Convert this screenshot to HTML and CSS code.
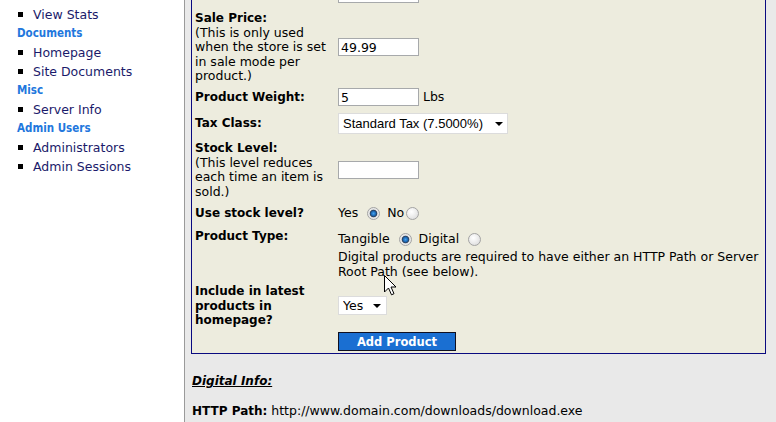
FILE: index.html
```html
<!DOCTYPE html>
<html>
<head>
<meta charset="utf-8">
<title>Add Product</title>
<link rel="stylesheet" href="styles.css">
</head>
<body>
<div class="page">
  <aside class="sidebar">
    <ul class="nav">
      <li class="item"><a href="#">View Stats</a></li>
      <li class="head">Documents</li>
      <li class="item"><a href="#">Homepage</a></li>
      <li class="item"><a href="#">Site Documents</a></li>
      <li class="head">Misc</li>
      <li class="item"><a href="#">Server Info</a></li>
      <li class="head">Admin Users</li>
      <li class="item"><a href="#">Administrators</a></li>
      <li class="item"><a href="#">Admin Sessions</a></li>
    </ul>
  </aside>
  <main class="main">
    <form class="formbox">
      <div class="row row-a">
        <div class="lbl"></div>
        <div class="fld"><input class="txt" type="text" value="59.99"></div>
      </div>
      <div class="row row-b">
        <div class="lbl"><b>Sale Price:</b><br>(This is only used when the store is set in sale mode per product.)</div>
        <div class="fld"><input class="txt" type="text" value="49.99"></div>
      </div>
      <div class="row row-c">
        <div class="lbl"><b>Product Weight:</b></div>
        <div class="fld"><input class="txt" type="text" value="5"> Lbs</div>
      </div>
      <div class="row row-d">
        <div class="lbl"><b>Tax Class:</b></div>
        <div class="fld"><span class="sel sel-tax"><select><option>Standard Tax (7.5000%)</option></select></span></div>
      </div>
      <div class="row row-e">
        <div class="lbl"><b>Stock Level:</b><br>(This level reduces each time an item is sold.)</div>
        <div class="fld"><input class="txt" type="text" value=""></div>
      </div>
      <div class="row row-f">
        <div class="lbl"><b>Use stock level?</b></div>
        <div class="fld">Yes <input class="radio" type="radio" name="stock" checked> No<input class="radio tight" type="radio" name="stock"></div>
      </div>
      <div class="row row-g">
        <div class="lbl"><b>Product Type:</b></div>
        <div class="fld">
          <div class="radios">Tangible <input class="radio" type="radio" name="ptype" checked> Digital <input class="radio" type="radio" name="ptype"></div>
          <div class="note">Digital products are required to have either an HTTP Path or Server Root Path (see below).</div>
        </div>
      </div>
      <div class="row row-h">
        <div class="lbl"><b>Include in latest products in homepage?</b></div>
        <div class="fld"><span class="sel sel-yes"><select><option>Yes</option></select></span></div>
      </div>
      <div class="row row-i">
        <div class="lbl"></div>
        <div class="fld"><button type="button" class="btn">Add Product</button></div>
      </div>
    </form>
    <h3 class="sub">Digital Info:</h3>
    <p class="path"><b>HTTP Path:</b> http://www.domain.com/downloads/download.exe</p>
  </main>
</div>
<svg class="cursor" width="13" height="21" viewBox="0 0 13 21"><path d="M0.5 0.5 L0.5 17 L4.5 13 L7.5 19.8 L10 18.7 L7 12 L12 12 Z" fill="#fff" stroke="#000" stroke-width="1" stroke-linejoin="miter"/></svg>
</body>
</html>
```
FILE: styles.css
```css
html, body {
  margin: 0;
  padding: 0;
}
body {
  font-family: "DejaVu Sans", Verdana, sans-serif;
  font-size: 12.5px;
  line-height: 14.5px;
  color: #000;
  background: #e9e9e9;
  height: 422px;
  overflow: hidden;
  position: relative;
}
.page {
  display: flex;
  height: 422px;
}
.sidebar {
  width: 184px;
  flex: none;
  background: #fff;
  border-right: 1px solid #9a9a9a;
}
.nav {
  list-style: none;
  margin: 0;
  padding: 5px 0 0 0;
}
.nav li {
  line-height: 19px;
  height: 19px;
}
.nav .head {
  padding-left: 17px;
  color: #2277dd;
  font-family: "DejaVu Sans Condensed", "DejaVu Sans", sans-serif;
  font-stretch: condensed;
  font-weight: bold;
  font-size: 11.5px;
}
.nav .item {
  padding-left: 33px;
  position: relative;
}
.nav .item::before {
  content: "";
  position: absolute;
  left: 18px;
  top: 7px;
  width: 5px;
  height: 5px;
  background: #000;
}
.nav .item a {
  color: #1a1a6a;
  text-decoration: none;
}
.main {
  flex: 1;
  padding: 0 10px 0 6px;
}
.formbox {
  display: block;
  margin: -16px 0 0 0;
  border: 1px solid #0a0a80;
  background: #edecde;
  padding: 0 3px 2px 3px;
}
.row {
  display: flex;
  align-items: center;
}
.lbl {
  box-sizing: border-box;
  width: 143px;
  padding-right: 4px;
  flex: none;
}
.lbl b {
  font-size: 12px;
}
.fld {
  flex: 1;
}
.row-a { height: 18px; }
.row-b { margin-top: 8px; }
.row-c { margin-top: 4.5px; height: 18px; }
.row-d { margin-top: 7px; height: 21px; }
.row-e { margin-top: 7px; }
.row-f { margin-top: 6px; height: 16px; }
.row-g { margin-top: 8px; align-items: flex-start; }
.row-h { margin-top: 5px; }
.row-i { margin-top: 4.5px; }
.radios {
  height: 21px;
  display: flex;
  align-items: center;
  white-space: pre;
}
.row-f .fld {
  display: flex;
  align-items: center;
  white-space: pre;
}
.note {
  padding-right: 2px;
}
.txt {
  box-sizing: border-box;
  width: 81px;
  height: 18px;
  border: 1px solid #a7a9ab;
  background: #fff;
  font-family: "DejaVu Sans", Verdana, sans-serif;
  font-size: 12.5px;
  padding: 0 2px;
  margin: 0;
  vertical-align: middle;
  color: #000;
}
.radio {
  -webkit-appearance: none;
  appearance: none;
  box-sizing: border-box;
  width: 13px;
  height: 13px;
  margin: 0 3px 0 5px;
  border-radius: 50%;
  border: 1px solid #a3a3a3;
  background: radial-gradient(circle at 40% 35%, #ffffff 0, #f2f2f2 35%, #d6d6d6 100%);
  vertical-align: middle;
}
.radio.tight {
  margin-left: 2px;
}
.radio:checked {
  background: radial-gradient(circle, #4aa3e8 0, #1d6fc0 2px, #2b3f5a 3.4px, #e4e4e4 4.2px, #f4f4f4 100%);
}
.sel {
  display: inline-block;
  position: relative;
  vertical-align: middle;
}
.sel select {
  -webkit-appearance: none;
  appearance: none;
  box-sizing: border-box;
  background: #fff;
  border: 1px solid #dcdcdc;
  margin: 0;
  color: #000;
  outline: none;
}
.sel::after {
  content: "";
  position: absolute;
  top: 50%;
  margin-top: -2px;
  border-left: 4px solid transparent;
  border-right: 4px solid transparent;
  border-top: 4px solid #000;
  pointer-events: none;
}
.sel-tax select {
  width: 170px;
  height: 21px;
  font-family: "Liberation Sans", Arial, sans-serif;
  font-size: 13px;
  padding: 0 0 0 4px;
}
.sel-tax::after {
  right: 5px;
}
.sel-yes select {
  width: 49px;
  height: 19px;
  font-family: "DejaVu Sans", Verdana, sans-serif;
  font-size: 12.5px;
  padding: 0 0 0 4px;
}
.sel-yes::after {
  right: 6px;
}
.btn {
  box-sizing: border-box;
  width: 118px;
  height: 19px;
  background: #1a6fd2;
  border: 1px solid #101020;
  color: #fff;
  font-family: "DejaVu Sans", Verdana, sans-serif;
  font-size: 11.5px;
  font-weight: bold;
  padding: 0;
  margin: 0;
  line-height: 16px;
  display: block;
}
.sub {
  margin: 20px 0 0 1px;
  font-size: 12px;
  font-weight: bold;
  font-style: italic;
  text-decoration: underline;
  line-height: 14.5px;
}
.path {
  margin: 15.5px 0 0 1px;
}
.path b {
  font-size: 12px;
}
.cursor {
  position: absolute;
  left: 384px;
  top: 275px;
}
```
